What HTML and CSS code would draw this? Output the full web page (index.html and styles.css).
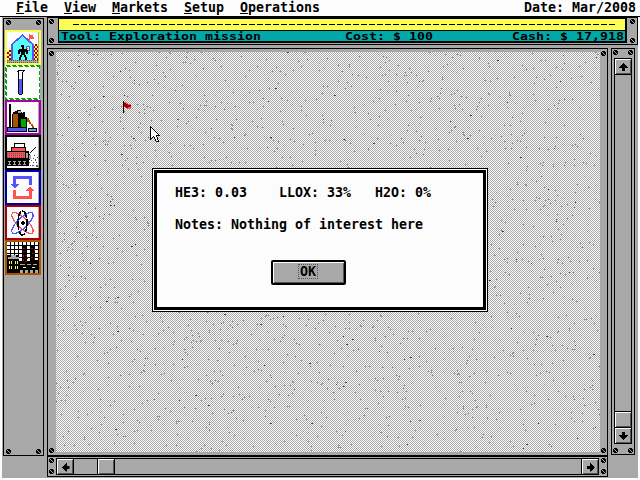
FILE: index.html
```html
<!DOCTYPE html>
<html lang="en">
<head>
<meta charset="utf-8">
<title>Exploration mission</title>
<link rel="stylesheet" href="styles.css">
</head>
<body>
<svg class="defs" aria-hidden="true">
  <defs>
    <symbol id="screw" viewBox="0 0 5 5"><path d="M1 0h3v1h1v3h-1v1h-3v-1h-1v-3h1z"/><path fill="#a8a8a8" d="M1 1h1v1h1v1h1v1h-1v-1h-1v-1h-1z"/></symbol>
    <symbol id="arrow-up" viewBox="0 0 9 8"><path d="M4 0h1v1h1v1h1v1h1v1h1v1H6v3H3V5H0V4h1V3h1V2h1V1h1z"/></symbol>
    <pattern id="brick" width="2" height="2" patternUnits="userSpaceOnUse"><path fill="#fc5454" d="M0 0h2v2h-2z"/><path fill="#555" d="M0 0h1v1h-1z"/></pattern>
    <pattern id="hedge" width="4" height="4" patternUnits="userSpaceOnUse"><path fill="#fcfc54" d="M0 0h4v4h-4z"/><path fill="#a80000" d="M0 0h2v2h-2zM2 2h2v2h-2z"/></pattern>
    <pattern id="dust" width="2" height="2" patternUnits="userSpaceOnUse"><path fill="#a8a8a8" d="M0 0h2v2h-2z"/><path fill="#555" d="M0 0h1v1h-1z"/></pattern>
    <pattern id="windows" width="4" height="4" patternUnits="userSpaceOnUse"><path fill="#fcfcfc" d="M0 0h3v3h-3z"/></pattern>
  </defs>
</svg>

<header class="menu">
  <nav><a><u>F</u>ile</a><a><u>V</u>iew</a><a><u>M</u>arkets</a><a><u>S</u>etup</a><a><u>O</u>perations</a></nav>
  <span>Date: Mar/2008</span>
</header>

<main class="desk">
  <aside class="tools panel">
    <div class="screws"><svg><use href="#screw"/></svg><svg><use href="#screw"/></svg></div>
    <div class="icons">
      <svg class="tool home" viewBox="0 0 32 31">
        <path fill="url(#hedge)" d="M0 18h2v-2h3v12H0zM27 14h1v-2h3v16h-4z"/>
        <path fill="#54fcfc" d="M5 12h1v-1h1v-1h1V9h1V8h1V7h1V6h1V5h1V4h1V3h2v1h1v1h1v1h1v1h1v1h1v1h1v1h1v1h1v1h1v16H5z"/>
        <path fill="none" stroke="#5454fc" stroke-width="1.6" d="M5 28V12.5L15.5 3 26 12.5V28"/>
        <path fill="#fc5454" d="M22 2h1v1h3v2h1v2h-4v4h-1z"/>
        <path fill="#5454fc" d="M19 14h4v5h-4z"/><path fill="#fcfc54" d="M20 15h2v3h-2z"/><path fill="#fc5454" d="M20 16h1v1h-1z"/>
        <path d="M14 13h3v4h3v1h1v4h-2v-2h-1v3h1v2h1v4h-2v-4h-1v-2h-2v2h-1v4h-2v-4h1v-2h1v-3h-1v2h-2v-4h1v-1h3z"/>
        <path fill="url(#dust)" d="M0 28h31v3H0z"/>
      </svg>
      <svg class="tool tube" viewBox="0 0 32 31">
        <path d="M11 3h7v1h-1v1h-1v22h-1v1h-3v-1h-1V5h-1V4h1z"/>
        <path fill="#fcfcfc" d="M12 4h4v1h-1v7h-3z"/><path fill="#5454fc" d="M12 12h3v15h-3z"/>
      </svg>
      <svg class="tool plant" viewBox="0 0 32 31">
        <path d="M2 2h2v23H2zM5 12h1v-2h2V9h2V8h4v2h1v15H5zM14 15h1v-4h1v-1h2v5h2v11h-6z"/>
        <path fill="#a85400" d="M6 12h5v13H6zM20 16h2v2h1v2h1v2h2v2h1v2h-2v-2h-1v-2h-2v-2h-2z"/>
        <path fill="#00a800" d="M14 17h5v8h-5z"/><path fill="#a8a8a8" d="M11 9h3v2h-3z"/>
        <path d="M0 25h20v5H0zM21 26h9v4h-9z"/><path fill="#5454fc" d="M1 26h18v3H1z"/><path fill="#54a8fc" d="M22 27h7v2h-7z"/>
      </svg>
      <svg class="tool rover" viewBox="0 0 32 31">
        <path d="M0 14h4v-4h3V6h11v4h1v4h3v3h1v6H0z"/>
        <path fill="#fcfcfc" d="M8 7h9v3H8z"/><path fill="#fc5454" d="M5 11h13v3H5z"/>
        <path fill="url(#brick)" d="M0 15h18v6H0z"/><path fill="#a8a8a8" d="M19 16h2v5h-2zM22 18h2v4h-2z"/>
        <path d="M0 22h22v7H0z"/><path fill="none" stroke="#a8a8a8" stroke-dasharray="3 2" d="M1 24.500h20M1 27.500h19"/><path fill="none" stroke="#a8a8a8" stroke-width="3" stroke-dasharray="1 4" d="M2 26h18"/>
        <path fill="none" stroke="#000" d="M23 16l6-6"/>
        <path fill="#555" d="M22 25h1v1h-1zM25 28h2v1h-2zM28 22h1v2h-1zM29 28h2v2h-2zM27 18h1v1h-1zM24 23h1v1h-1zM26 25h1v1h-1zM23 28h1v1h-1zM29 25h1v1h-1zM26 21h1v1h-1zM30 20h1v1h-1z"/>
      </svg>
      <svg class="tool cycle" viewBox="0 0 32 31">
        <path fill="#5454fc" d="M6 4h19v9h-3V7H9v5h3v1h-1v1h-1v1H9v1H7v-1H6v-1H5v-1H4v-1h2z"/>
        <path fill="#fc5454" d="M25 27H6v-9h3v6h13v-5h-3v-1h1v-1h1v-1h1v-1h2v1h1v1h1v1h1v1h-2z"/>
      </svg>
      <svg class="tool atom" viewBox="0 0 32 31">
        <g fill="none" stroke-width="1.3"><ellipse cx="15.500" cy="16" rx="14" ry="5" stroke="#fc5454" transform="rotate(44 15.500 16)"/><ellipse cx="15.500" cy="16" rx="14" ry="5" stroke="#5454fc" transform="rotate(-44 15.500 16)"/><ellipse cx="15.500" cy="16" rx="4.500" ry="12" stroke="#000" stroke-width="1.5" stroke-dasharray="9 1"/></g>
        <path d="M15 14h2v1h1v2h-1v1h-2v-1h-1v-2h1z"/>
      </svg>
      <svg class="tool city" viewBox="0 0 32 31">
        <path d="M0 0h32v31H0z"/><path fill="url(#windows)" d="M0 0h16v13H0zM12 12h3v8h-3zM16 0h15v3H16zM20 4h3v16h-3zM28 4h3v14h-3z"/>
        <path d="M15 3h5v20h-5zM24 3h4v18h-4z"/><path fill="#a8a8a8" d="M4 13h5v2h3v2H1v-2h3z"/>
        <path fill="none" stroke="#a80000" stroke-dasharray="2 2" d="M16 6h4M16 9h4M16 13v6h4v-6zM24 6h3v5h-3M24 15h3v4"/>
        <path fill="#fcfc54" d="M2 19h1v3H2zM4 19h1v3H4zM8 19h1v3H8zM10 19h1v3h-1zM2 24h1v3H2zM4 24h1v3H4zM8 24h1v3H8zM10 24h1v3h-1zM16 25h3v1h-3zM25 25h3v1h-3z"/>
        <path fill="#a8a8a8" d="M13 22h5v1h-5zM20 22h4v1h-4zM26 22h4v1h-4zM13 28h3v3h-3zM18 28h3v3h-3zM23 28h3v3h-3zM28 28h3v3h-3z"/>
      </svg>
    </div>
    <div class="screws"><svg><use href="#screw"/></svg><svg><use href="#screw"/></svg></div>
  </aside>

  <section class="right">
    <div class="status panel">
      <div class="bolts"><svg><use href="#screw"/></svg><svg><use href="#screw"/></svg></div>
      <div class="readout">
        <div class="ticker"><svg viewBox="0 0 566 11"><path d="M14 5.500h542" stroke="#000" stroke-dasharray="6 2"/></svg></div>
        <div class="facts"><span>Tool: Exploration mission</span><span>Cost: $ 100</span><span>Cash: $ 17,918</span></div>
      </div>
      <div class="bolts"><svg><use href="#screw"/></svg><svg><use href="#screw"/></svg></div>
    </div>

    <div class="work">
      <div class="view">
        <div class="mapframe panel">
          <div class="bolts"><svg><use href="#screw"/></svg><svg><use href="#screw"/></svg></div>
          <div class="map">
            <canvas id="terrain" width="544" height="400"></canvas>
            <svg class="flag" viewBox="0 0 9 12"><path d="M0 0h1v12H0z"/><path fill="#fc5454" d="M1 1h2v1h2v1h3v5H4V7H2V6H1z"/><path fill="#a80000" d="M1 2h2v1h2v1h3v2H5v1H3V6H1z"/></svg>
            <svg class="cursor" viewBox="0 0 10 17"><path fill="#fcfcfc" stroke="#000" d="M.5.5V13.500L3.500 10.500L6.500 15.500L8.500 15.500L6.500 9.500H9.500z"/></svg>
            <div class="dialog">
              <div class="face">
                <p class="levels"><span>HE3: 0.03</span><span>LLOX: 33%</span><span>H2O: 0%</span></p>
                <p>Notes: Nothing of interest here</p>
                <button><span>OK</span></button>
              </div>
            </div>
          </div>
          <div class="bolts"><svg><use href="#screw"/></svg><svg><use href="#screw"/></svg></div>
        </div>
        <div class="hbar panel">
          <div class="bolts"><svg><use href="#screw"/></svg><svg><use href="#screw"/></svg></div>
          <div class="track">
            <i class="key"><svg class="left"><use href="#arrow-up"/></svg></i><i class="gap"></i><i class="key thumb"></i><i class="rest"></i><i class="key"><svg class="east"><use href="#arrow-up"/></svg></i>
          </div>
          <div class="bolts"><svg><use href="#screw"/></svg><svg><use href="#screw"/></svg></div>
        </div>
      </div>
      <div class="vbar panel">
        <div class="screws"><svg><use href="#screw"/></svg><svg><use href="#screw"/></svg></div>
        <div class="track">
          <i class="key"><svg><use href="#arrow-up"/></svg></i><i class="rest"></i><i class="key thumb"></i><i class="key"><svg class="down"><use href="#arrow-up"/></svg></i>
        </div>
        <div class="screws"><svg><use href="#screw"/></svg><svg><use href="#screw"/></svg></div>
      </div>
    </div>
  </section>
</main>
<script src="terrain.js"></script>
</body>
</html>
```
FILE: styles.css
```css
* { box-sizing: border-box; }
body { margin: 0; width: 640px; height: 480px; overflow: hidden; background: #fcfcfc; color: #000; font: bold 13.29px/16px "DejaVu Sans Mono", monospace; }
svg { display: block; shape-rendering: crispEdges; }
.defs { position: absolute; width: 0; height: 0; }
.menu { height: 17px; border-bottom: 1px solid #000; display: flex; justify-content: space-between; padding: 0 4px 0 16px; white-space: pre; }
.menu nav { display: flex; gap: 16px; }
.menu u { text-decoration: none; display: inline-block; height: 14px; line-height: 16px; border-bottom: 1px solid #000; vertical-align: top; }
.desk { display: flex; gap: 3px; width: 636px; height: 461px; margin-left: 2px; padding-left: 1px; background: #a8a8a8; }
.panel { border: 1px solid #000; background: #a8a8a8; }
.screws { display: flex; justify-content: space-between; }
.bolts { display: flex; flex-direction: column; justify-content: space-between; }
.screws svg, .bolts svg { width: 5px; height: 5px; flex: none; }
.tools { width: 41px; height: 438px; margin-top: 1px; padding: 1px; display: flex; flex-direction: column; }
.tools .screws { padding: 0 1px; }
.tools > .screws:first-child { margin-bottom: 5px; }
.tools > .screws:last-child { margin-top: auto; }
.icons { width: 36px; flex: none; }
.tool { width: 36px; height: 35px; border: 2px solid; background: #fcfcfc; box-shadow: inset -1px 0 #a8a8a8; }
.home { border-color: #fcfc54; }
.tube { padding: 2px; border: 0; background: linear-gradient(#fcfcfc, #fcfcfc) 2px 2px / 32px 31px no-repeat, repeating-linear-gradient(45deg, #00a800 0 2.2px, #fcfcfc 2.2px 4.24px); }
.plant { border-color: #a800a8; }
.rover { border-color: #000; }
.cycle { border-color: #0000a8; }
.atom { border-color: #a80000; }
.city { border-color: #a85400; }
.right { width: 591px; display: flex; flex-direction: column; gap: 3px; }
.status { height: 28px; display: flex; justify-content: space-between; padding: 0 2px 0 1px; }
.status .bolts { padding: 1px 0; }
.readout { width: 569px; height: 25px; margin: 0 3px 0 4px; border: 1px solid #000; border-width: 1px 2px 2px 1px; }
.ticker { height: 12px; background: #fcfc54; border-bottom: 1px solid #000; }
.ticker svg { width: 566px; height: 11px; }
.facts { height: 10px; background: #00a8a8; display: grid; grid-template-columns: 284px 167px 1fr; padding-left: 2px; white-space: pre; }
.facts span { transform: scaleY(.75); transform-origin: 0 0; line-height: 15px; height: 15px; }
.work { display: flex; gap: 3px; }
.view { width: 561px; }
.mapframe { height: 408px; display: flex; justify-content: space-between; padding: 1px; }
.mapframe .bolts { padding: 1px 0; }
.map { width: 545px; height: 400px; margin: 2px 0 0 2px; position: relative; }
.map canvas { display: block; }
.flag { position: absolute; left: 67px; top: 49px; width: 9px; height: 12px; }
.cursor { position: absolute; left: 94px; top: 74px; width: 10px; height: 17px; }
.dialog { position: absolute; left: 96px; top: 116px; width: 336px; height: 144px; border: 1px solid #000; padding: 1px; background: #fcfcfc; }
.face { height: 140px; border: 3px solid #000; padding: 12px 18px; display: flex; flex-direction: column; }
.face p { margin: 0 0 16px; white-space: pre; }
.levels { display: grid; grid-template-columns: 104px 96px 1fr; }
.face button { width: 75px; height: 25px; margin: 11px 0 0 96px; padding: 0; border: 2px solid #000; border-radius: 2px; background: #a8a8a8; box-shadow: inset 1px 1px #fcfcfc, inset -1px -1px #545454; font: inherit; color: #000; display: flex; justify-content: center; align-items: flex-start; }
.face button span { width: 20px; height: 15px; line-height: 14px; border: 1px dotted #545454; margin: 2px 1px 0 0; text-align: center; }
.hbar { height: 21px; display: flex; justify-content: space-between; padding: 1px; }
.hbar .bolts { padding: 0 0 1px; }
.track { border: 1px solid #000; display: flex; }
.hbar .track { width: 543px; height: 17px; }
.key { display: flex; align-items: center; justify-content: center; flex: none; width: 16px; height: 15px; box-shadow: inset 1px 1px #fcfcfc, inset -1px -1px #545454; }
.key svg { width: 9px; height: 8px; }
.left { transform: rotate(-90deg); }
.east { transform: rotate(90deg); }
.down { transform: rotate(180deg); }
.gap { width: 25px; border: 1px solid #000; border-width: 0 1px; }
.rest { flex: 1; border: 1px solid #000; border-width: 0 1px; }
.vbar { width: 24px; height: 407px; display: flex; flex-direction: column; align-items: center; padding: 1px; }
.vbar .screws { width: 20px; }
.vbar .track { width: 18px; flex: 1; flex-direction: column; margin: 3px 0 4px; }
.vbar .rest { border-width: 1px 0; }
.vbar .thumb { border-bottom: 1px solid #000; height: 16px; }
```
FILE: terrain.js
```js
// Lunar surface: a fine checker dither with scattered pebbles.
const ctx = document.getElementById('terrain').getContext('2d');
let seed = 71;
const rnd = n => {
  seed = (seed + 0x6D2B79F5) | 0;
  let t = Math.imul(seed ^ (seed >>> 15), 1 | seed);
  t = (t + Math.imul(t ^ (t >>> 7), 61 | t)) ^ t;
  return Math.floor(((t ^ (t >>> 14)) >>> 0) / 4294967296 * n);
};
ctx.fillStyle = '#fcfcfc';
ctx.fillRect(0, 0, 544, 400);
ctx.fillStyle = '#a8a8a8';
for (let y = 0; y < 400; y++) for (let x = y % 2; x < 544; x += 2) ctx.fillRect(x, y, 1, 1);
for (let i = 0; i < 3000; i++) {
  const x = rnd(544), y = rnd(400);
  ctx.fillStyle = i % 20 === 0 ? '#404040' : '#8c8c8c';
  ctx.fillRect(x, y, i % 12 === 0 ? 2 : 1, 1);
}
```
